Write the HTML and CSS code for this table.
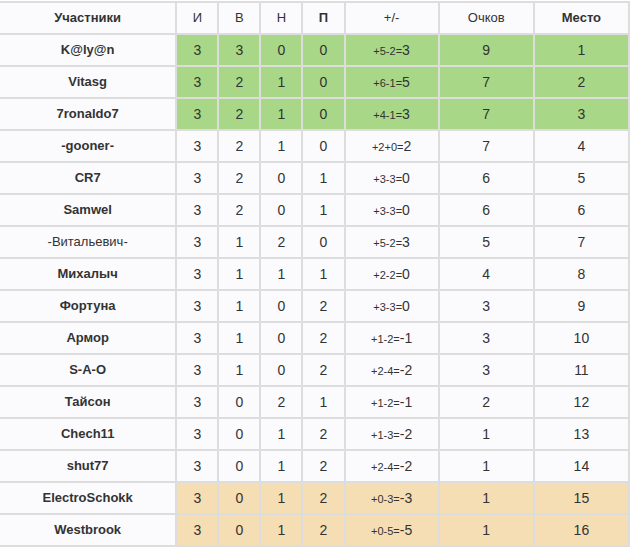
FILE: index.html
```html
<!DOCTYPE html>
<html lang="ru">
<head>
<meta charset="utf-8">
<title>Таблица</title>
<link rel="stylesheet" href="styles.css">
</head>
<body>
<table class="standings">
  <colgroup>
    <col class="c-name"><col class="c-n"><col class="c-n"><col class="c-n"><col class="c-n"><col class="c-diff"><col class="c-pts"><col class="c-pos">
  </colgroup>
  <thead>
    <tr>
      <th class="b">Участники</th><th>И</th><th>В</th><th>Н</th><th class="b">П</th><th>+/-</th><th>Очков</th><th class="b">Место</th>
    </tr>
  </thead>
  <tbody>
    <tr class="top"><td class="name">K@ly@n</td><td>3</td><td>3</td><td>0</td><td>0</td><td class="diff"><small>+5-2=</small>3</td><td>9</td><td>1</td></tr>
    <tr class="top"><td class="name">Vitasg</td><td>3</td><td>2</td><td>1</td><td>0</td><td class="diff"><small>+6-1=</small>5</td><td>7</td><td>2</td></tr>
    <tr class="top"><td class="name">7ronaldo7</td><td>3</td><td>2</td><td>1</td><td>0</td><td class="diff"><small>+4-1=</small>3</td><td>7</td><td>3</td></tr>
    <tr><td class="name">-gooner-</td><td>3</td><td>2</td><td>1</td><td>0</td><td class="diff"><small>+2+0=</small>2</td><td>7</td><td>4</td></tr>
    <tr><td class="name">CR7</td><td>3</td><td>2</td><td>0</td><td>1</td><td class="diff"><small>+3-3=</small>0</td><td>6</td><td>5</td></tr>
    <tr><td class="name">Samwel</td><td>3</td><td>2</td><td>0</td><td>1</td><td class="diff"><small>+3-3=</small>0</td><td>6</td><td>6</td></tr>
    <tr><td class="name thin">-Витальевич-</td><td>3</td><td>1</td><td>2</td><td>0</td><td class="diff"><small>+5-2=</small>3</td><td>5</td><td>7</td></tr>
    <tr><td class="name">Михалыч</td><td>3</td><td>1</td><td>1</td><td>1</td><td class="diff"><small>+2-2=</small>0</td><td>4</td><td>8</td></tr>
    <tr><td class="name">Фортуна</td><td>3</td><td>1</td><td>0</td><td>2</td><td class="diff"><small>+3-3=</small>0</td><td>3</td><td>9</td></tr>
    <tr><td class="name">Армор</td><td>3</td><td>1</td><td>0</td><td>2</td><td class="diff"><small>+1-2=</small>-1</td><td>3</td><td>10</td></tr>
    <tr><td class="name">S-A-O</td><td>3</td><td>1</td><td>0</td><td>2</td><td class="diff"><small>+2-4=</small>-2</td><td>3</td><td>11</td></tr>
    <tr><td class="name">Тайсон</td><td>3</td><td>0</td><td>2</td><td>1</td><td class="diff"><small>+1-2=</small>-1</td><td>2</td><td>12</td></tr>
    <tr><td class="name">Chech11</td><td>3</td><td>0</td><td>1</td><td>2</td><td class="diff"><small>+1-3=</small>-2</td><td>1</td><td>13</td></tr>
    <tr><td class="name">shut77</td><td>3</td><td>0</td><td>1</td><td>2</td><td class="diff"><small>+2-4=</small>-2</td><td>1</td><td>14</td></tr>
    <tr class="bottom"><td class="name">ElectroSchokk</td><td>3</td><td>0</td><td>1</td><td>2</td><td class="diff"><small>+0-3=</small>-3</td><td>1</td><td>15</td></tr>
    <tr class="bottom"><td class="name">Westbrook</td><td>3</td><td>0</td><td>1</td><td>2</td><td class="diff"><small>+0-5=</small>-5</td><td>1</td><td>16</td></tr>
  </tbody>
</table>
</body>
</html>
```

FILE: styles.css
```css
html, body {
  margin: 0;
  padding: 0;
  background: #ffffff;
}

body {
  padding-top: 1px;
  font-family: "Liberation Sans", Arial, sans-serif;
  color: #333333;
}

.standings {
  border-collapse: collapse;
  table-layout: fixed;
  width: 630px;
  background: #fbfbfe;
}

.c-name { width: 176px; }
.c-n { width: 42px; }
.c-diff { width: 94px; }
.c-pts { width: 95px; }
.c-pos { width: 95px; }

.standings th,
.standings td {
  border: 2px solid #dddddd;
  height: 30px;
  padding: 0;
  text-align: center;
  vertical-align: middle;
  line-height: 16px;
}

.standings th:first-child,
.standings td:first-child {
  border-left: none;
}

.standings th {
  font-size: 13px;
  font-weight: normal;
}

.standings th.b {
  font-weight: bold;
}

.standings td {
  font-size: 14px;
}

.standings td.name {
  font-size: 13px;
  font-weight: bold;
}

.standings td.thin {
  font-weight: normal;
}

.diff small {
  font-size: 11px;
}

.top td:not(.name) {
  background: #a8d887;
}

.bottom td:not(.name) {
  background: #f5deb3;
}
```
